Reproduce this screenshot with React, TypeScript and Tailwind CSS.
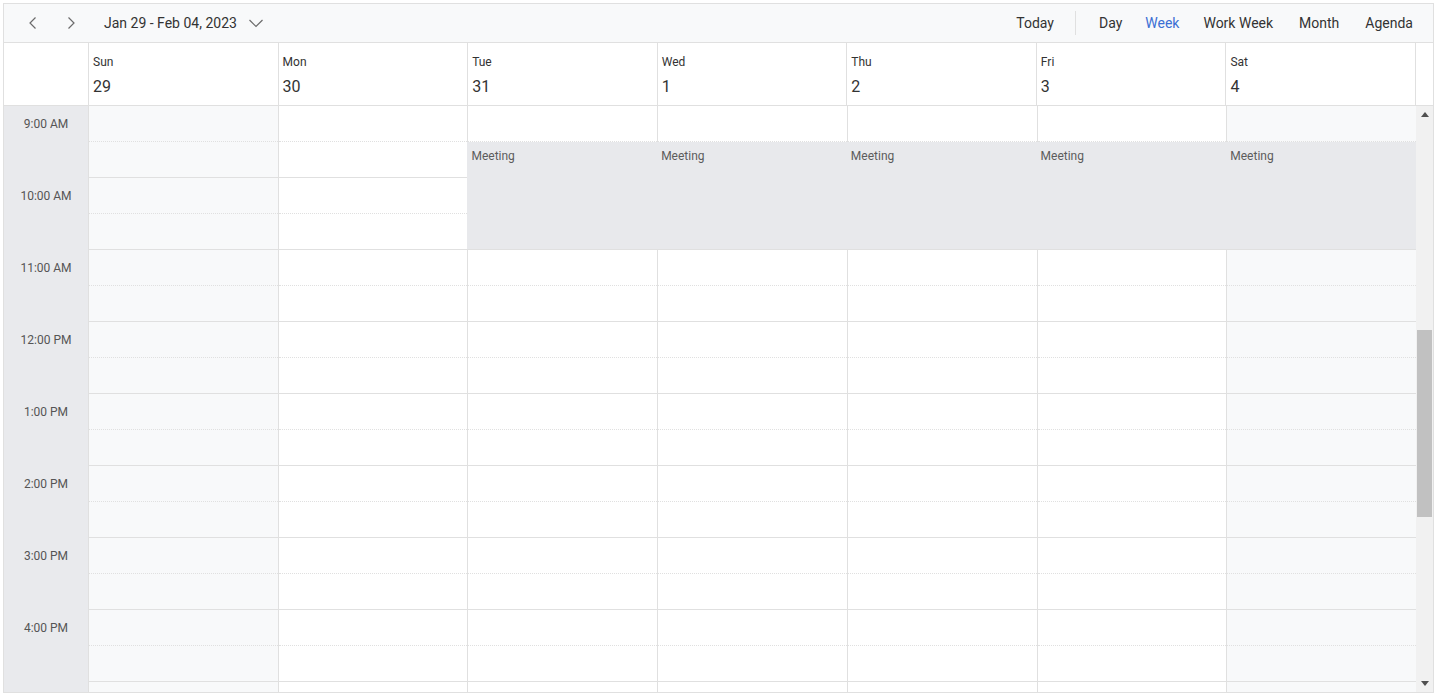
import React from "react";

const days = [
  { name: "Sun", num: "29", off: true },
  { name: "Mon", num: "30", off: false },
  { name: "Tue", num: "31", off: false },
  { name: "Wed", num: "1", off: false },
  { name: "Thu", num: "2", off: false },
  { name: "Fri", num: "3", off: false },
  { name: "Sat", num: "4", off: true },
];

const hours = ["9:00 AM", "10:00 AM", "11:00 AM", "12:00 PM", "1:00 PM", "2:00 PM", "3:00 PM", "4:00 PM"];

const ChevronLeft = () => (
  <svg width="16" height="16" viewBox="0 0 16 16" fill="none">
    <path d="M10.5 2.5 L5 8 L10.5 13.5" stroke="#6b6b6b" strokeWidth="1.2" />
  </svg>
);
const ChevronRight = () => (
  <svg width="16" height="16" viewBox="0 0 16 16" fill="none">
    <path d="M5.5 2.5 L11 8 L5.5 13.5" stroke="#6b6b6b" strokeWidth="1.2" />
  </svg>
);
const ChevronDown = () => (
  <svg width="18" height="18" viewBox="0 0 18 18" fill="none">
    <path d="M2.5 6 L9 12.5 L15.5 6" stroke="#6b6b6b" strokeWidth="1.2" />
  </svg>
);

export default function App() {
  const slots = Array.from({ length: 17 });
  return (
    <div
      className="w-full h-[698px] bg-white pt-[3px] pl-[3px]"
      style={{ fontFamily: '"Segoe UI", Roboto, "Noto Sans", sans-serif' }}
    >
      <div className="w-[1431px] h-[690px] border border-[#e0e0e0] flex flex-col overflow-hidden">
        {/* Toolbar */}
        <div className="h-[39px] shrink-0 bg-[#f8f9fa] border-b border-[#e0e0e0] flex items-center text-[14px] text-[#333]">
          <div className="w-[21px]" />
          <div className="w-[16px] flex items-center justify-center"><ChevronLeft /></div>
          <div className="w-[22px]" />
          <div className="w-[16px] flex items-center justify-center"><ChevronRight /></div>
          <div className="w-[25px]" />
          <span>Jan 29 - Feb 04, 2023</span>
          <div className="ml-[10px] flex items-center"><ChevronDown /></div>
          <div className="flex-1" />
          <span>Today</span>
          <div className="w-px h-[24px] bg-[#e0e0e0] ml-[21px] mr-[23px]" />
          <span>Day</span>
          <span className="ml-[23px] text-[#3b6fd4]">Week</span>
          <span className="ml-[24px]">Work Week</span>
          <span className="ml-[26px]">Month</span>
          <span className="ml-[26px]">Agenda</span>
          <div className="w-[20px]" />
        </div>

        {/* Header */}
        <div className="h-[63px] shrink-0 flex border-b border-[#e0e0e0] bg-white">
          <div className="w-[84px] shrink-0" />
          <div className="flex-1 grid grid-cols-7 border-r border-[#e0e0e0]">
            {days.map((d) => (
              <div key={d.name} className="border-l border-[#e0e0e0] pl-[4px] pt-[11px] text-[#333]">
                <div className="text-[12px] leading-[16px]">{d.name}</div>
                <div className="text-[16px] leading-[22px] mt-[6px]">{d.num}</div>
              </div>
            ))}
          </div>
          <div className="w-[17px] shrink-0" />
        </div>

        {/* Body */}
        <div className="flex-1 flex min-h-0 overflow-hidden">
          <div className="w-[84px] shrink-0 bg-[#e9eaed] flex flex-col">
            {hours.map((h) => (
              <div key={h} className="h-[72px] shrink-0">
                <div className="h-[36px] flex items-center justify-center text-[12px] text-[#555]">{h}</div>
              </div>
            ))}
          </div>
          <div className="flex-1 grid grid-cols-7">
            {days.map((d, i) => (
              <div
                key={d.name}
                className={`relative border-l border-[#e0e0e0] ${d.off ? "bg-[#f8f9fa]" : "bg-white"}`}
              >
                {slots.map((_, s) => (
                  <div
                    key={s}
                    className={`h-[36px] border-b border-[#e0e0e0] ${s % 2 === 0 ? "border-dotted" : "border-solid"}`}
                  />
                ))}
                {i >= 2 && (
                  <div className="absolute left-[-1px] right-0 top-[36px] h-[107px] bg-[#e8e9ec] pl-[4px] pt-[6px] text-[12px] leading-[16px] text-[#5c5c5c]">
                    Meeting
                  </div>
                )}
              </div>
            ))}
          </div>
          {/* Scrollbar */}
          <div className="w-[17px] shrink-0 bg-[#f1f1f1] flex flex-col">
            <div className="h-[17px] flex items-center justify-center">
              <svg width="8" height="5" viewBox="0 0 8 5"><path d="M0 5 L4 0 L8 5 Z" fill="#505050" /></svg>
            </div>
            <div className="h-[207px]" />
            <div className="h-[187px] mx-[1px] bg-[#c1c1c1]" />
            <div className="flex-1" />
            <div className="h-[17px] flex items-center justify-center">
              <svg width="8" height="5" viewBox="0 0 8 5"><path d="M0 0 L8 0 L4 5 Z" fill="#505050" /></svg>
            </div>
          </div>
        </div>
      </div>
    </div>
  );
}
